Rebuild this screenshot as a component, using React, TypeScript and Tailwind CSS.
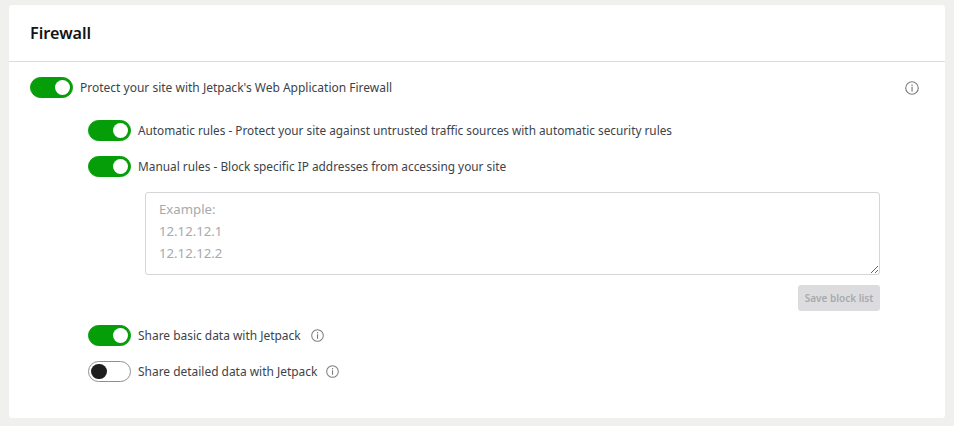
import { ReactNode } from 'react'

function Toggle({ on = true }: { on?: boolean }) {
  return (
    <span className={`flex h-[21px] w-[43px] shrink-0 items-center rounded-full border px-[2px] ${on ? 'justify-end border-[#069e08] bg-[#069e08]' : 'justify-start border-[#8c8f94] bg-white'}`}>
      <span className={`h-[15.5px] w-[15.5px] rounded-full ${on ? 'bg-white' : 'bg-[#1e1e1e]'}`} />
    </span>
  )
}

function InfoIcon({ size = 13 }: { size?: number }) {
  return (
    <svg width={size} height={size} viewBox="0 0 15 15" fill="none" className="shrink-0 text-[#7d7d7d]">
      <circle cx="7.5" cy="7.5" r="6.7" stroke="currentColor" strokeWidth="1.2" />
      <rect x="6.9" y="3.6" width="1.3" height="1.5" fill="currentColor" />
      <rect x="6.9" y="6.1" width="1.3" height="5.2" fill="currentColor" />
    </svg>
  )
}

function Row({ children, on = true, size = 'text-[11.95px]' }: { children: ReactNode; on?: boolean; size?: string }) {
  return (
    <div className="flex h-[21px] items-center">
      <Toggle on={on} />
      <span className={`ml-[7px] leading-[21px] text-[#3c434a] ${size}`}>{children}</span>
    </div>
  )
}

export default function App() {
  return (
    <div className="h-[426px] w-[954px] overflow-hidden bg-[#f0f0ef] px-[9px] pt-[5px] font-['Noto_Sans',sans-serif]">
      <div className="h-[413px] w-[936px] rounded-[3px] bg-white">
        <div className="flex h-[57px] items-center border-b border-[#dcdcde] px-[21px]">
          <h1 className="text-[16.2px] font-semibold text-[#101517]">Firewall</h1>
        </div>
        <div className="pl-[21px] pr-[26px] pt-[15px]">
          <div className="flex items-center justify-between">
            <Row size="text-[12px]">Protect your site with Jetpack's Web Application Firewall</Row>
            <InfoIcon size={14} />
          </div>
          <div className="ml-[58px] mt-[22px] flex flex-col gap-[15px]">
            <Row size="text-[11.8px]">Automatic rules - Protect your site against untrusted traffic sources with automatic security rules</Row>
            <Row size="text-[11.85px]">Manual rules - Block specific IP addresses from accessing your site</Row>
          </div>
          <div className="ml-[115px] mr-[39px] mt-[15px] flex flex-col items-end">
            <textarea
              className="block h-[83px] w-full rounded-[3px] border border-[#d5d5d5] px-[13px] py-[5px] text-[13.2px] leading-[22px] placeholder:text-[#a7aaad]"
              placeholder={'Example:\n12.12.12.1\n12.12.12.2'}
            />
            <button disabled className="mt-[10px] h-[26px] w-[82px] rounded-[3px] bg-[#dcdcde] text-[10px] font-semibold text-[#a7aaad]">
              Save block list
            </button>
          </div>
          <div className="ml-[58px] mt-[14px] flex flex-col gap-[15px]">
            <Row>
              <span className="flex items-center gap-[10px]">Share basic data with Jetpack <InfoIcon /></span>
            </Row>
            <Row on={false}>
              <span className="flex items-center gap-[9px]">Share detailed data with Jetpack <InfoIcon /></span>
            </Row>
          </div>
        </div>
      </div>
    </div>
  )
}
